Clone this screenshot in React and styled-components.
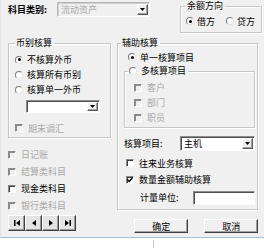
import React from "react";
import styled, { createGlobalStyle } from "styled-components";

const GlobalStyle = createGlobalStyle`
  html, body { margin: 0; padding: 0; background: #fff; }
  body {
    font-family: "Noto Sans CJK SC", "Noto Sans", sans-serif;
    font-size: 9px;
    color: #000;
  }
  * { box-sizing: border-box; }
`;

const Window = styled.div`
  width: 264px;
  height: 248px;
  overflow: hidden;
  display: flex;
  flex-direction: column;
  background: #fff;
`;

const Dialog = styled.div`
  height: 238px;
  flex: none;
  background: #f0f0f0;
  border-left: 1px solid #dde5ee;
  border-bottom: 1px solid #a7bcd3;
  padding-left: 7px;
  display: flex;
  flex-direction: column;
`;

const TopRow = styled.div`
  display: flex;
  align-items: flex-start;
  height: 37px;
  flex: none;
`;

const FieldLabel = styled.span`
  width: ${p => p.$w || 49}px;
  flex: none;
  margin-top: ${p => p.$mt || 0}px;
  line-height: 12px;
  font-weight: ${p => (p.$bold ? "bold" : "normal")};
  white-space: nowrap;
`;

const Combo = styled.div`
  display: flex;
  align-items: stretch;
  width: ${p => (p.$w ? `${p.$w}px` : "auto")};
  flex: ${p => (p.$w ? "none" : 1)};
  height: ${p => p.$h}px;
  margin-top: ${p => p.$mt || 0}px;
  margin-left: ${p => p.$ml || 0}px;
  background: ${p => (p.$disabled ? "#f0f0f0" : "#fff")};
  border: 1px solid;
  border-color: ${p => (p.$disabled ? "#b4b4b4 #fff #fff #b4b4b4" : "#8c8c8c #fff #fff #8c8c8c")};
  box-shadow: ${p => (p.$disabled ? "inset 1px 1px 0 #d0d0d0" : "inset 1px 1px 0 #505050")};
  padding: 1px;
`;

const ComboText = styled.span`
  flex: 1;
  padding-left: 2px;
  line-height: ${p => p.$lh || 11}px;
  color: ${p => (p.$disabled ? "#a8a8a8" : "#000")};
  white-space: nowrap;
  overflow: hidden;
`;

const ArrowButton = styled.span`
  width: 11px;
  flex: none;
  display: flex;
  align-items: center;
  justify-content: center;
  background: #f0f0f0;
  border: 1px solid;
  border-color: #fff #5a5a5a #5a5a5a #fff;
  box-shadow: inset -1px -1px 0 #a0a0a0;
`;

const Group = styled.fieldset`
  margin: 0;
  min-width: 0;
  border: 1px solid #c6c6c6;
  box-shadow: 1px 1px 0 #fff, inset 1px 1px 0 #fff;
  padding: ${p => p.$pt || 0}px ${p => p.$pr || 2}px ${p => p.$pb || 2}px ${p => p.$pl || 6}px;
  margin-left: ${p => p.$ml || 0}px;
  width: ${p => (p.$w ? `${p.$w}px` : "auto")};
  align-self: ${p => (p.$stretch ? "stretch" : "auto")};
  flex: none;
  display: flex;
  flex-direction: column;
  align-items: flex-start;
`;

const Legend = styled.legend`
  padding: 0 2px 0 1px;
  margin-left: ${p => p.$ml || 0}px;
  height: ${p => p.$h || 12}px;
  line-height: ${p => p.$h || 12}px;
  display: flex;
  align-items: center;
  gap: 4px;
  white-space: nowrap;
`;

const Option = styled.label`
  display: flex;
  align-items: center;
  height: ${p => p.$h || 15}px;
  gap: ${p => p.$gap || 4}px;
  margin-left: ${p => p.$ml || 0}px;
  margin-top: ${p => p.$mt || 0}px;
  color: ${p => (p.$disabled ? "#a8a8a8" : "#000")};
  white-space: nowrap;
  flex: none;
`;

const RadioMark = styled.span`
  width: 8px;
  height: 8px;
  flex: none;
  border-radius: 50%;
  background: #fff;
  border: 1px solid;
  border-color: #7c7c7c #e6e6e6 #e6e6e6 #7c7c7c;
  display: flex;
  align-items: center;
  justify-content: center;
  &::after {
    content: "";
    width: 3px;
    height: 3px;
    border-radius: 50%;
    background: #000;
    display: ${p => (p.$checked ? "block" : "none")};
  }
`;

const CheckMark = styled.span`
  width: 8px;
  height: 8px;
  flex: none;
  display: flex;
  align-items: center;
  justify-content: center;
  background: ${p => (p.$disabled ? "#f0f0f0" : "#fff")};
  border: 1px solid;
  border-color: #8a8a8a #fff #fff #8a8a8a;
  box-shadow: inset 1px 1px 0 ${p => (p.$disabled ? "#8a8a8a" : "#3c3c3c")};
`;

const Body = styled.div`
  display: grid;
  grid-template-columns: 103px 141px;
  column-gap: 6px;
  align-items: start;
`;

const Column = styled.div`
  display: flex;
  flex-direction: column;
  align-items: flex-start;
`;

const Row = styled.div`
  display: flex;
  align-items: center;
  align-self: stretch;
  height: ${p => p.$h}px;
  margin-top: ${p => p.$mt || 0}px;
  margin-left: ${p => p.$ml || 0}px;
  gap: ${p => p.$gap || 0}px;
`;

const NavBar = styled.div`
  display: flex;
  margin-top: 1px;
  height: 16px;
`;

const NavButton = styled.button`
  width: 17px;
  height: 16px;
  padding: 0;
  display: flex;
  align-items: center;
  justify-content: center;
  background: #e4e4e4;
  border: 1px solid;
  border-color: #fff #404040 #404040 #fff;
  box-shadow: inset -1px -1px 0 #9a9a9a;
`;

const PushButton = styled.button`
  width: ${p => p.$w}px;
  height: 14px;
  padding: 0;
  margin-left: ${p => p.$ml || 0}px;
  font-family: inherit;
  font-size: 9px;
  line-height: 11px;
  color: #000;
  background: #f0f0f0;
  border: 1px solid;
  border-color: #fff #404040 #404040 #fff;
  box-shadow: inset -1px -1px 0 #a0a0a0;
`;

const Footer = styled.div`
  flex: 1;
  background: #fff;
  display: flex;
  padding-left: 153px;
`;

const Tick = styled.span`
  width: 1px;
  height: 8px;
  margin-top: 2px;
  background: #c4c4c4;
`;

const DownArrow = () => (
  <svg width="5" height="3" viewBox="0 0 5 3">
    <path d="M0 0h5L2.5 3z" fill="#000" />
  </svg>
);

const CheckTick = () => (
  <svg width="6" height="6" viewBox="0 0 6 6">
    <path d="M0.5 2.5 L2.3 4.5 L5.5 0.8" stroke="#000" strokeWidth="1.4" fill="none" />
  </svg>
);

const NavIcon = ({ kind }) => {
  const paths = {
    first: "M1 1h1.5v6H1z M7 1v6L3 4z",
    prev: "M6 1v6L2 4z",
    next: "M2 1v6l4-3z",
    last: "M1 1v6l4-3z M5.5 1H7v6H5.5z",
  };
  return (
    <svg width="8" height="8" viewBox="0 0 8 8">
      <path d={paths[kind]} fill="#000" />
    </svg>
  );
};

const Radio = ({ checked, children, ...rest }) => (
  <Option {...rest}>
    <RadioMark $checked={checked} />
    <span>{children}</span>
  </Option>
);

const Check = ({ checked, disabled, children, ...rest }) => (
  <Option $gap={5} $disabled={disabled} {...rest}>
    <CheckMark $disabled={disabled}>{checked && <CheckTick />}</CheckMark>
    <span>{children}</span>
  </Option>
);

export default function App() {
  return (
    <Window>
      <GlobalStyle />
      <Dialog>
        <TopRow>
          <FieldLabel $bold $mt={4}>科目类别:</FieldLabel>
          <Combo $w={93} $h={15} $mt={2} $disabled>
            <ComboText $disabled>流动资产</ComboText>
            <ArrowButton>
              <DownArrow />
            </ArrowButton>
          </Combo>
          <Group $w={82} $ml={30} $pl={5} $pb={4}>
            <Legend>余额方向</Legend>
            <Row $h={14} $mt={2} $gap={11}>
              <Radio checked $gap={3} $h={14}>借方</Radio>
              <Radio $gap={3} $h={14}>贷方</Radio>
            </Row>
          </Group>
        </TopRow>

        <Body>
          <Column>
            <Group $stretch $pt={3} $pl={6} $pb={2}>
              <Legend>币别核算</Legend>
              <Radio checked>不核算外币</Radio>
              <Radio>核算所有币别</Radio>
              <Radio>核算单一外币</Radio>
              <Combo $w={74} $h={13} $mt={3} $ml={11}>
                <ComboText $lh={9} />
                <ArrowButton>
                  <DownArrow />
                </ArrowButton>
              </Combo>
              <Check disabled $mt={8} $h={14}>期末调汇</Check>
            </Group>
            <Check disabled $mt={8} $h={17}>日记账</Check>
            <Check disabled $h={17}>结算类科目</Check>
            <Check $h={17}>现金类科目</Check>
            <Check disabled $h={17}>银行类科目</Check>
            <NavBar>
              <NavButton><NavIcon kind="first" /></NavButton>
              <NavButton><NavIcon kind="prev" /></NavButton>
              <NavButton><NavIcon kind="next" /></NavButton>
              <NavButton><NavIcon kind="last" /></NavButton>
            </NavBar>
          </Column>

          <Column>
            <Group $stretch $pt={1} $pl={6} $pb={3} $pr={2}>
              <Legend $ml={-3}>辅助核算</Legend>
              <Radio checked $h={14} $ml={4}>单一核算项目</Radio>
              <Group $stretch $pt={2} $pl={3} $pb={2}>
                <Legend $h={14}>
                  <RadioMark />
                  <span>多核算项目</span>
                </Legend>
                <Check disabled $ml={6}>客户</Check>
                <Check disabled $ml={6}>部门</Check>
                <Check disabled $ml={6}>职员</Check>
              </Group>
              <Row $h={15} $mt={8}>
                <FieldLabel $w={56}>核算项目:</FieldLabel>
                <Combo $h={15}>
                  <ComboText>主机</ComboText>
                  <ArrowButton>
                    <DownArrow />
                  </ArrowButton>
                </Combo>
              </Row>
              <Check $h={16} $mt={4} $ml={2}>往来业务核算</Check>
              <Check checked $h={17} $ml={2}>数量金额辅助核算</Check>
              <Row $h={16} $mt={2} $ml={16}>
                <FieldLabel $w={53}>计量单位:</FieldLabel>
                <Combo $h={14}>
                  <ComboText />
                </Combo>
              </Row>
            </Group>
            <Row $h={14} $mt={9}>
              <PushButton $w={57} $ml={17}>确定</PushButton>
              <PushButton $w={56} $ml={16}>取消</PushButton>
            </Row>
          </Column>
        </Body>
      </Dialog>
      <Footer>
        <Tick />
      </Footer>
    </Window>
  );
}
